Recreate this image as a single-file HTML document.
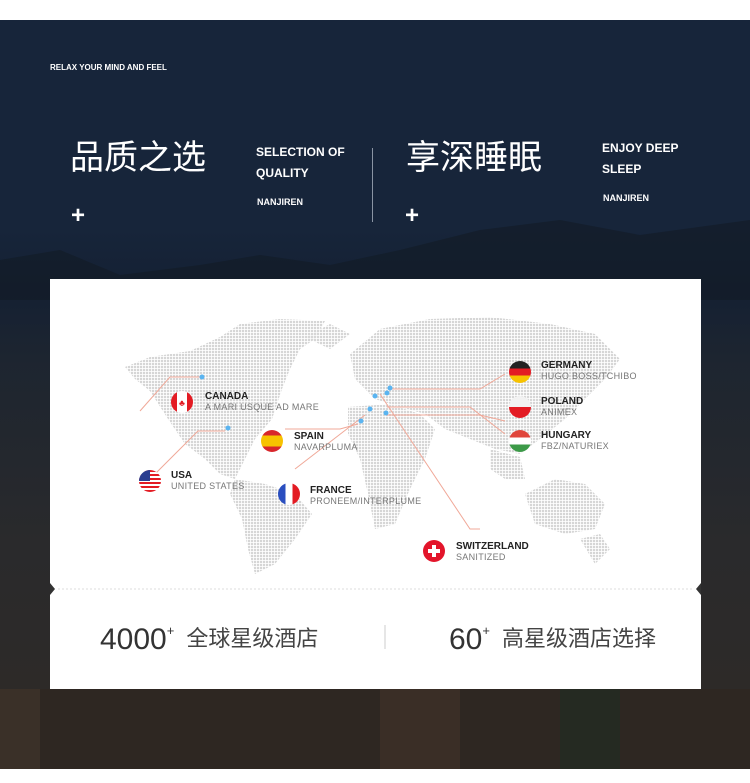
<!DOCTYPE html>
<html><head><meta charset="utf-8"><style>
*{margin:0;padding:0;box-sizing:border-box}
body{width:750px;height:783px;background:#fff;position:relative;overflow:hidden;font-family:"Liberation Sans","Noto Sans CJK SC",sans-serif}
.bg{position:absolute;left:0;top:20px;width:750px;height:749px;background:linear-gradient(180deg,#17253a 0%,#17253a 28%,#142033 36%,#1d2530 45%,#2a2a2c 70%,#2f2a26 100%)}
.t{position:absolute;color:#fff;white-space:nowrap}
.card{position:absolute;left:50px;top:279px;width:651px;height:410px;background:#fff}
.lbl{position:absolute;font-size:10px;line-height:11px;color:#222;font-weight:bold;white-space:nowrap}
.lbl span{display:block;font-weight:normal;color:#777;font-size:9px;letter-spacing:.3px}
.flag{position:absolute;width:22px;height:22px;border-radius:50%;overflow:hidden}
</style></head><body>
<div class="bg"></div>
<svg style="position:absolute;left:0;top:220px" width="750" height="80"><path d="M0 40 L60 30 L120 55 L200 45 L260 35 L330 45 L400 30 L480 10 L560 0 L640 15 L750 0 L750 80 L0 80Z" fill="#121a24" opacity=".6"/></svg>
<svg style="position:absolute;left:0;top:689px" width="750" height="80"><rect x="0" y="0" width="750" height="80" fill="#2e2722"/><rect x="380" y="0" width="80" height="80" fill="#3a2e26"/><rect x="560" y="0" width="60" height="80" fill="#252a22"/><rect x="0" y="0" width="40" height="80" fill="#3a3028"/></svg>
<div class="t" style="left:50px;top:63px;font-size:8px;font-weight:bold">RELAX YOUR MIND AND FEEL</div>
<div class="t" style="left:70px;top:138px;font-size:34px;line-height:40px">品质之选</div>
<div class="t" style="left:256px;top:142px;font-size:12px;font-weight:bold;line-height:21px">SELECTION OF<br>QUALITY</div>
<div class="t" style="left:257px;top:197px;font-size:9px;font-weight:bold">NANJIREN</div>
<div class="t" style="left:71px;top:202px;font-size:24px;font-weight:bold">+</div>
<div style="position:absolute;left:372px;top:148px;width:1px;height:74px;background:#8a94a3"></div>
<div class="t" style="left:406px;top:138px;font-size:34px;line-height:40px">享深睡眠</div>
<div class="t" style="left:602px;top:138px;font-size:12px;font-weight:bold;line-height:21px">ENJOY DEEP<br>SLEEP</div>
<div class="t" style="left:603px;top:193px;font-size:9px;font-weight:bold">NANJIREN</div>
<div class="t" style="left:405px;top:202px;font-size:24px;font-weight:bold">+</div>
<div class="card">
<svg width="651" height="410" style="position:absolute;left:0;top:0">
<defs><pattern id="d" width="3" height="3" patternUnits="userSpaceOnUse"><rect width="2.2" height="2.2" fill="#d6d6d6"/></pattern></defs>
<g fill="url(#d)">
<path d="M75 88 L100 78 L140 72 L170 58 L190 45 L230 40 L275 42 L265 60 L250 70 L240 90 L232 110 L222 140 L205 160 L195 180 L185 200 L170 195 L155 180 L135 165 L118 140 L100 112 L85 100Z"/>
<path d="M185 200 L215 205 L245 215 L262 235 L245 260 L225 285 L205 295 L198 270 L192 240 L180 215Z"/>
<path d="M255 58 L280 45 L300 55 L280 70Z"/>
<path d="M300 75 L330 50 L380 40 L440 38 L500 45 L545 55 L570 80 L555 100 L535 120 L515 140 L490 160 L470 175 L445 170 L420 160 L395 150 L375 135 L350 128 L325 120 L305 100Z"/>
<path d="M298 128 L340 125 L370 135 L385 150 L375 180 L360 210 L345 245 L325 250 L318 215 L310 180 L298 155Z"/>
<path d="M475 215 L505 200 L535 205 L555 225 L545 250 L515 255 L485 245Z"/>
<path d="M440 170 L470 178 L475 200 L455 200 L440 190Z"/>
<path d="M530 260 L550 255 L560 270 L545 285Z"/>
</g>
<g stroke="#f0a898" stroke-width="1" fill="none">
<path d="M90 132 L120 98 L150 98"/>
<path d="M100 200 L148 152 L175 152"/>
<path d="M245 190 L315 136"/>
<path d="M235 150 L290 150 L308 145"/>
<path d="M330 115 L420 250 L430 250"/>
<path d="M340 110 L430 110 L455 95"/>
<path d="M337 128 L420 128 L455 155"/>
<path d="M336 136 L430 136 L455 142"/>
</g>
<g fill="#5ab4f0"><circle cx="152" cy="98" r="2.5"/><circle cx="178" cy="149" r="2.5"/><circle cx="340" cy="109" r="2.5"/><circle cx="337" cy="114" r="2.5"/><circle cx="325" cy="117" r="2.5"/><circle cx="320" cy="130" r="2.5"/><circle cx="311" cy="142" r="2.5"/><circle cx="336" cy="134" r="2.5"/></g>
<path d="M0 304 L5 310 L0 316Z M651 304 L646 310 L651 316Z" fill="#333"/>
<line x1="8" y1="310" x2="643" y2="310" stroke="#ddd" stroke-dasharray="2 2"/>
<line x1="335" y1="346" x2="335" y2="370" stroke="#ccc"/>
</svg>
<div class="flag" style="left:121px;top:112px;background:linear-gradient(90deg,#e31b23 27%,#fff 27%,#fff 73%,#e31b23 73%)"><div style="position:absolute;left:8px;top:7px;color:#e31b23;font-size:9px">♣</div></div>
<div class="lbl" style="left:155px;top:112px">CANADA<span>A MARI USQUE AD MARE</span></div>
<div class="flag" style="left:89px;top:191px;background:repeating-linear-gradient(180deg,#e31b23 0 2px,#fff 2px 4px)"><div style="position:absolute;left:0;top:0;width:11px;height:11px;background:#2b3d8f"></div></div>
<div class="lbl" style="left:121px;top:191px">USA<span>UNITED STATES</span></div>
<div class="flag" style="left:211px;top:151px;background:linear-gradient(180deg,#d8262b 25%,#f7c200 25%,#f7c200 75%,#d8262b 75%)"></div>
<div class="lbl" style="left:244px;top:152px">SPAIN<span>NAVARPLUMA</span></div>
<div class="flag" style="left:228px;top:204px;background:linear-gradient(90deg,#2a4ebf 33%,#fff 33%,#fff 67%,#e31b23 67%)"></div>
<div class="lbl" style="left:260px;top:206px">FRANCE<span>PRONEEM/INTERPLUME</span></div>
<div class="flag" style="left:373px;top:261px;background:#e3152b"><div style="position:absolute;left:9px;top:5px;width:4px;height:12px;background:#fff"></div><div style="position:absolute;left:5px;top:9px;width:12px;height:4px;background:#fff"></div></div>
<div class="lbl" style="left:406px;top:262px">SWITZERLAND<span>SANITIZED</span></div>
<div class="flag" style="left:459px;top:82px;background:linear-gradient(180deg,#222 33%,#e31b23 33%,#e31b23 67%,#f7c200 67%)"></div>
<div class="lbl" style="left:491px;top:81px">GERMANY<span>HUGO BOSS/TCHIBO</span></div>
<div class="flag" style="left:459px;top:117px;background:linear-gradient(180deg,#f2f2f2 50%,#e31b23 50%)"></div>
<div class="lbl" style="left:491px;top:117px">POLAND<span>ANIMEX</span></div>
<div class="flag" style="left:459px;top:151px;background:linear-gradient(180deg,#e0463c 33%,#fff 33%,#fff 67%,#3c9a48 67%)"></div>
<div class="lbl" style="left:491px;top:151px">HUNGARY<span>FBZ/NATURIEX</span></div>
<div style="position:absolute;left:50px;top:334px;font-size:30px;color:#333;white-space:nowrap;line-height:36px">4000<sup style="font-size:13px;vertical-align:14px">+</sup><span style="font-size:22px;color:#444;vertical-align:3px;margin-left:12px">全球星级酒店</span></div>
<div style="position:absolute;left:399px;top:334px;font-size:30px;color:#333;white-space:nowrap;line-height:36px">60<sup style="font-size:13px;vertical-align:14px">+</sup><span style="font-size:22px;color:#444;vertical-align:3px;margin-left:12px">高星级酒店选择</span></div>
</div>
</body></html>
